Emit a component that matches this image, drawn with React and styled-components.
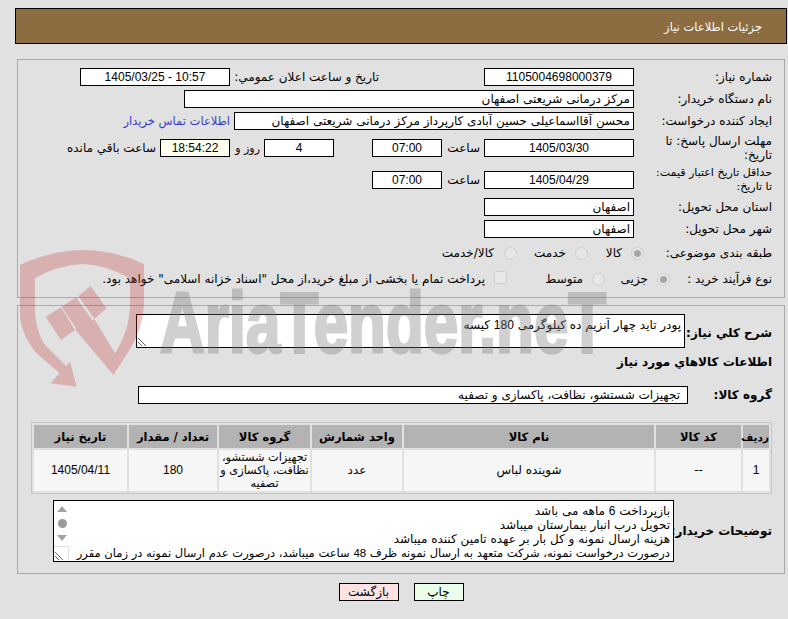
import React from "react";
import styled, { createGlobalStyle } from "styled-components";

const Global = createGlobalStyle`
  html, body { margin: 0; padding: 0; background: #e1e1e1; }
  body { width: 788px; height: 619px; overflow: hidden; font-family: "DejaVu Sans", Tahoma, sans-serif; font-size: 12px; color: #000; }
`;
const Page = styled.div`position: relative; width: 788px; height: 619px; direction: rtl; padding: 8px 1px 0 15px; box-sizing: border-box;`;
const Header = styled.div`height: 36px; box-sizing: border-box; background: #8c6d42; border: 1px solid #000; color: #fff; font-size: 11.5px; line-height: 37px; padding-right: 24px;`;
const Card = styled.div`box-sizing: border-box; width: 768px; margin-right: 2px; border: 1px solid #a9a9a9;`;
const TopCard = styled(Card)`height: 239px; margin-top: 15px; padding-top: 6px;`;
const BottomCard = styled(Card)`height: 269px; margin-top: 7px; padding-top: 8px;`;
const Row = styled.div`display: flex; align-items: center; height: ${p => p.$h || 22}px;`;
const Label = styled.div`width: ${p => p.$w || 150}px; flex: none; padding-right: 12px; box-sizing: border-box; font-size: ${p => p.$fs || 12}px; line-height: 14px;`;
const Box = styled.div`box-sizing: border-box; flex: none; width: ${p => p.$w}px; height: 18px; background: ${p => p.$bg || "#fff"}; border: 1px solid #000; line-height: 16px; font-size: 12px; text-align: right; padding: 0 3px; white-space: nowrap; overflow: hidden; margin-right: ${p => p.$mr || 0}px;`;
const NumBox = styled(Box)`font-family: "Liberation Sans", sans-serif; font-size: 12px; text-align: center; direction: ltr;`;
const GroupBox = styled(Box)`padding-right: 7px;`;
const Text = styled.span`flex: none; width: ${p => p.$w ? `${p.$w}px` : "auto"}; margin-right: ${p => p.$mr || 0}px; font-size: ${p => p.$fs || 12}px; white-space: nowrap; color: ${p => p.$c || "#000"};`;
const Num = styled.span`font-family: "Liberation Sans", sans-serif;`;
const Radio = styled.span`flex: none; display: block; box-sizing: border-box; width: 13px; height: 13px; border-radius: 50%; background: #e7e7e7; border: 1px solid #cdcdcd; margin-right: ${p => p.$mr || 0}px; position: relative;
  &::after { content: ""; display: ${p => p.$on ? "block" : "none"}; position: absolute; inset: 2px; border-radius: 50%; background: #a6a6a6; }`;
const Check = styled.span`flex: none; display: block; box-sizing: border-box; width: 13px; height: 13px; background: #e7e7e7; border: 1px solid #cdcdcd; border-radius: 2px; margin-right: ${p => p.$mr || 0}px; margin-top: -4px;`;
const Bold = styled.div`font-weight: 700; font-size: 12px; white-space: nowrap;`;
const Grip = styled.svg`position: absolute; left: 0; bottom: 0;`;
const Area = styled.div`position: relative; box-sizing: border-box; flex: none; width: ${p => p.$w}px; height: ${p => p.$h}px; background: #fff; border: 1px solid #000; padding: 3px; font-size: 12px; line-height: 14px; overflow: hidden; white-space: nowrap;`;
const DescRow = styled.div`display: flex; height: 34px;`;
const DescLabel = styled(Bold)`width: 99px; flex: none; padding: 12px 12px 0 0; box-sizing: border-box;`;
const InfoTitle = styled(Bold)`padding-right: 12px; height: 28px; line-height: 28px;`;
const GroupRow = styled.div`display: flex; align-items: center; height: 38px;`;
const GroupLabel = styled(Bold)`width: 96px; flex: none; padding-right: 12px; box-sizing: border-box;`;
const Table = styled.table`border-collapse: separate; border-spacing: 2px; border: 1px solid #c6c6c6; margin: 8px 12px 0 0; width: 740px; table-layout: fixed;`;
const Col = styled.col`width: ${p => p.$w}px;`;
const Th = styled.th`background: #b3b3b3; height: 23px; padding: 0; font-size: ${p => p.$fs || 11.5}px; font-weight: 700; text-align: center;`;
const Td = styled.td`background: #f6f6f6; height: 41px; padding: 0; font-size: ${p => p.$fs || 12}px; line-height: 13px; text-align: center;`;
const NotesRow = styled.div`display: flex; align-items: center; margin-top: 6px;`;
const NotesLabel = styled(Bold)`width: 110px; flex: none; padding-right: 12px; box-sizing: border-box;`;
const NoteLine = styled.div`height: 14px; font-size: ${p => p.$fs || 12}px;`;
const ScrollGutter = styled.div`position: absolute; left: 0; top: 0; bottom: 0; width: 16px; background: #fff; display: flex; flex-direction: column; align-items: center; padding-top: 5px; box-sizing: border-box; gap: 7px;`;
const Corner = styled.div`position: absolute; left: 0; bottom: 0; width: 15px; height: 15px; background: #fff; border-top: 1px solid #e2e2e2; border-right: 1px solid #e2e2e2; box-sizing: border-box;`;
const Dot = styled.span`width: 9px; height: 9px; border-radius: 50%; background: #9a9a9a;`;
const Tri = styled.span`width: 0; height: 0; border-left: 5px solid transparent; border-right: 5px solid transparent; ${p => p.$up ? "border-bottom: 6px solid #a3a3a3;" : "border-top: 6px solid #a3a3a3;"}`;
const Buttons = styled.div`display: flex; justify-content: center; gap: 15px; margin-top: 9px;`;
const Btn = styled.div`box-sizing: border-box; width: ${p => p.$w}px; height: 18px; border: 1px solid #000; background: ${p => p.$bg}; text-align: center; line-height: 16px; font-size: 12px;`;
const Watermark = styled.div`position: absolute; left: 0; top: 0; width: 788px; height: 619px; pointer-events: none; direction: ltr;`;
const Shield = styled.svg`position: absolute; left: 0; top: 190px; opacity: .27;`;
const Mark = styled.div`position: absolute; left: 160px; top: 272px; font-family: "Liberation Sans", sans-serif; font-weight: 700; font-size: 86px; line-height: 100px; color: #787878; -webkit-text-stroke: 3px #787878; opacity: .34; white-space: nowrap; transform-origin: 0 50%; transform: scaleX(.72);`;

const GripIcon = () => (
  <Grip width="12" height="12" viewBox="0 0 12 12"><path d="M1 3 L9 11 M1 7 L5 11" stroke="#666" strokeWidth="1" fill="none" /></Grip>
);

const cols = [26, 85, 250, 90, 91, 88, 93];

export default function App() {
  return (
    <Page>
      <Global />
      <Header>جزئیات اطلاعات نیاز</Header>
      <TopCard>
        <Row><Label>شماره نیاز:</Label><NumBox $w={150}>1105004698000379</NumBox><Text $mr={105} $w={149}>تاریخ و ساعت اعلان عمومي:</Text><NumBox $w={150}>1405/03/25 - 10:57</NumBox></Row>
        <Row><Label>نام دستگاه خریدار:</Label><Box $w={450}>مرکز درمانی شریعتی اصفهان</Box></Row>
        <Row><Label>ایجاد کننده درخواست:</Label><Box $w={400}>محسن آقااسماعیلی حسین آبادی کارپرداز مرکز درمانی شریعتی اصفهان</Box><Text $mr={4} $fs={11.5} $c="#3a3acb">اطلاعات تماس خریدار</Text></Row>
        <Row $h={32}><Label>مهلت ارسال پاسخ: تا<br />تاریخ:</Label><NumBox $w={150}>1405/03/30</NumBox><Text $mr={4} $w={38}>ساعت</Text><NumBox $w={70}>07:00</NumBox><NumBox $w={70} $mr={38}>4</NumBox><Text $mr={4} $w={26} $fs={11}>روز و</Text><NumBox $w={70} $mr={4} $bg="#fffff0">18:54:22</NumBox><Text $mr={4}>ساعت باقي مانده</Text></Row>
        <Row $h={32}><Label $fs={11}>حداقل تاریخ اعتبار قیمت:<br />تا تاریخ:</Label><NumBox $w={150}>1405/04/29</NumBox><Text $mr={4} $w={38}>ساعت</Text><NumBox $w={70}>07:00</NumBox></Row>
        <Row><Label>استان محل تحویل:</Label><Box $w={150}>اصفهان</Box></Row>
        <Row><Label>شهر محل تحویل:</Label><Box $w={150}>اصفهان</Box></Row>
        <Row $h={26}><Label $w={140}>طبقه بندی موضوعی:</Label><Radio $on /><Text $mr={9} $w={16}>کالا</Text><Radio $mr={18} /><Text $mr={9} $w={32}>خدمت</Text><Radio $mr={17} /><Text $mr={10}>کالا/خدمت</Text></Row>
        <Row $h={26}><Label $w={114}>نوع فرآیند خرید :</Label><Radio $on /><Text $mr={9} $w={28}>جزیی</Text><Radio $mr={15} /><Text $mr={9} $w={36}>متوسط</Text><Check $mr={40} /><Text $mr={9}>پرداخت تمام یا بخشی از مبلغ خرید،از محل "اسناد خزانه اسلامی" خواهد بود.</Text></Row>
      </TopCard>
      <BottomCard>
        <DescRow><DescLabel>شرح كلي نياز:</DescLabel><Area $w={549} $h={34}>پودر تاید چهار آنزیم ده کیلوگرمی <Num>180</Num> کیسه<GripIcon /></Area></DescRow>
        <InfoTitle>اطلاعات كالاهاي مورد نياز</InfoTitle>
        <GroupRow><GroupLabel>گروه كالا:</GroupLabel><GroupBox $w={550}>تجهیزات شستشو، نظافت، پاکسازی و تصفیه</GroupBox></GroupRow>
        <Table>
          <colgroup>{cols.map((w, i) => <Col key={i} $w={w} />)}</colgroup>
          <thead><tr><Th $fs={10.5}>ردیف</Th><Th>کد کالا</Th><Th>نام کالا</Th><Th>واحد شمارش</Th><Th>گروه کالا</Th><Th>تعداد / مقدار</Th><Th>تاریخ نیاز</Th></tr></thead>
          <tbody><tr><Td><Num>1</Num></Td><Td>--</Td><Td>شوینده لباس</Td><Td>عدد</Td><Td $fs={11.3}>تجهیزات شستشو، نظافت، پاکسازی و تصفیه</Td><Td><Num>180</Num></Td><Td><Num>1405/04/11</Num></Td></tr></tbody>
        </Table>
        <NotesRow>
          <NotesLabel>توضیحات خریدار:</NotesLabel>
          <Area $w={621} $h={62}>
            <NoteLine>بازپرداخت <Num>6</Num> ماهه می باشد</NoteLine>
            <NoteLine>تحویل درب انبار بیمارستان میباشد</NoteLine>
            <NoteLine>هزینه ارسال نمونه و کل بار بر عهده تامین کننده میباشد</NoteLine>
            <NoteLine $fs={11.5}>درصورت درخواست نمونه، شرکت متعهد به ارسال نمونه ظرف <Num>48</Num> ساعت میباشد، درصورت عدم ارسال نمونه در زمان مقرر</NoteLine>
            <ScrollGutter><Tri $up /><Dot /><Tri /></ScrollGutter>
            <Corner /><GripIcon />
          </Area>
        </NotesRow>
      </BottomCard>
      <Buttons><Btn $w={50} $bg="#eaffea">چاپ</Btn><Btn $w={60} $bg="#ffe3e3">بازگشت</Btn></Buttons>
      <Watermark>
        <Shield width="394" height="220" viewBox="0 0 1182 660">
          <g fill="#c23030">
            <path d="M60 225 Q150 182 250 180 Q350 182 432 222 L432 345 Q428 420 385 485 L340 555 L225 418 L283 388 L345 490 Q390 420 390 340 L390 265 Q320 225 250 222 Q170 225 105 265 L105 370 Q110 430 135 465 L205 535 L185 555 L110 490 Q60 430 60 370 Z" />
            <path d="M152 580 L210 515 L230 590 Z" />
            <path d="M137 380 L183 352 L225 420 L183 450 Z" />
            <path d="M185 350 L228 322 L278 392 L232 420 Z" />
            <path d="M235 318 L272 288 L320 355 L283 386 Z" />
          </g>
        </Shield>
        <Mark>AriaTender.neT</Mark>
      </Watermark>
    </Page>
  );
}
